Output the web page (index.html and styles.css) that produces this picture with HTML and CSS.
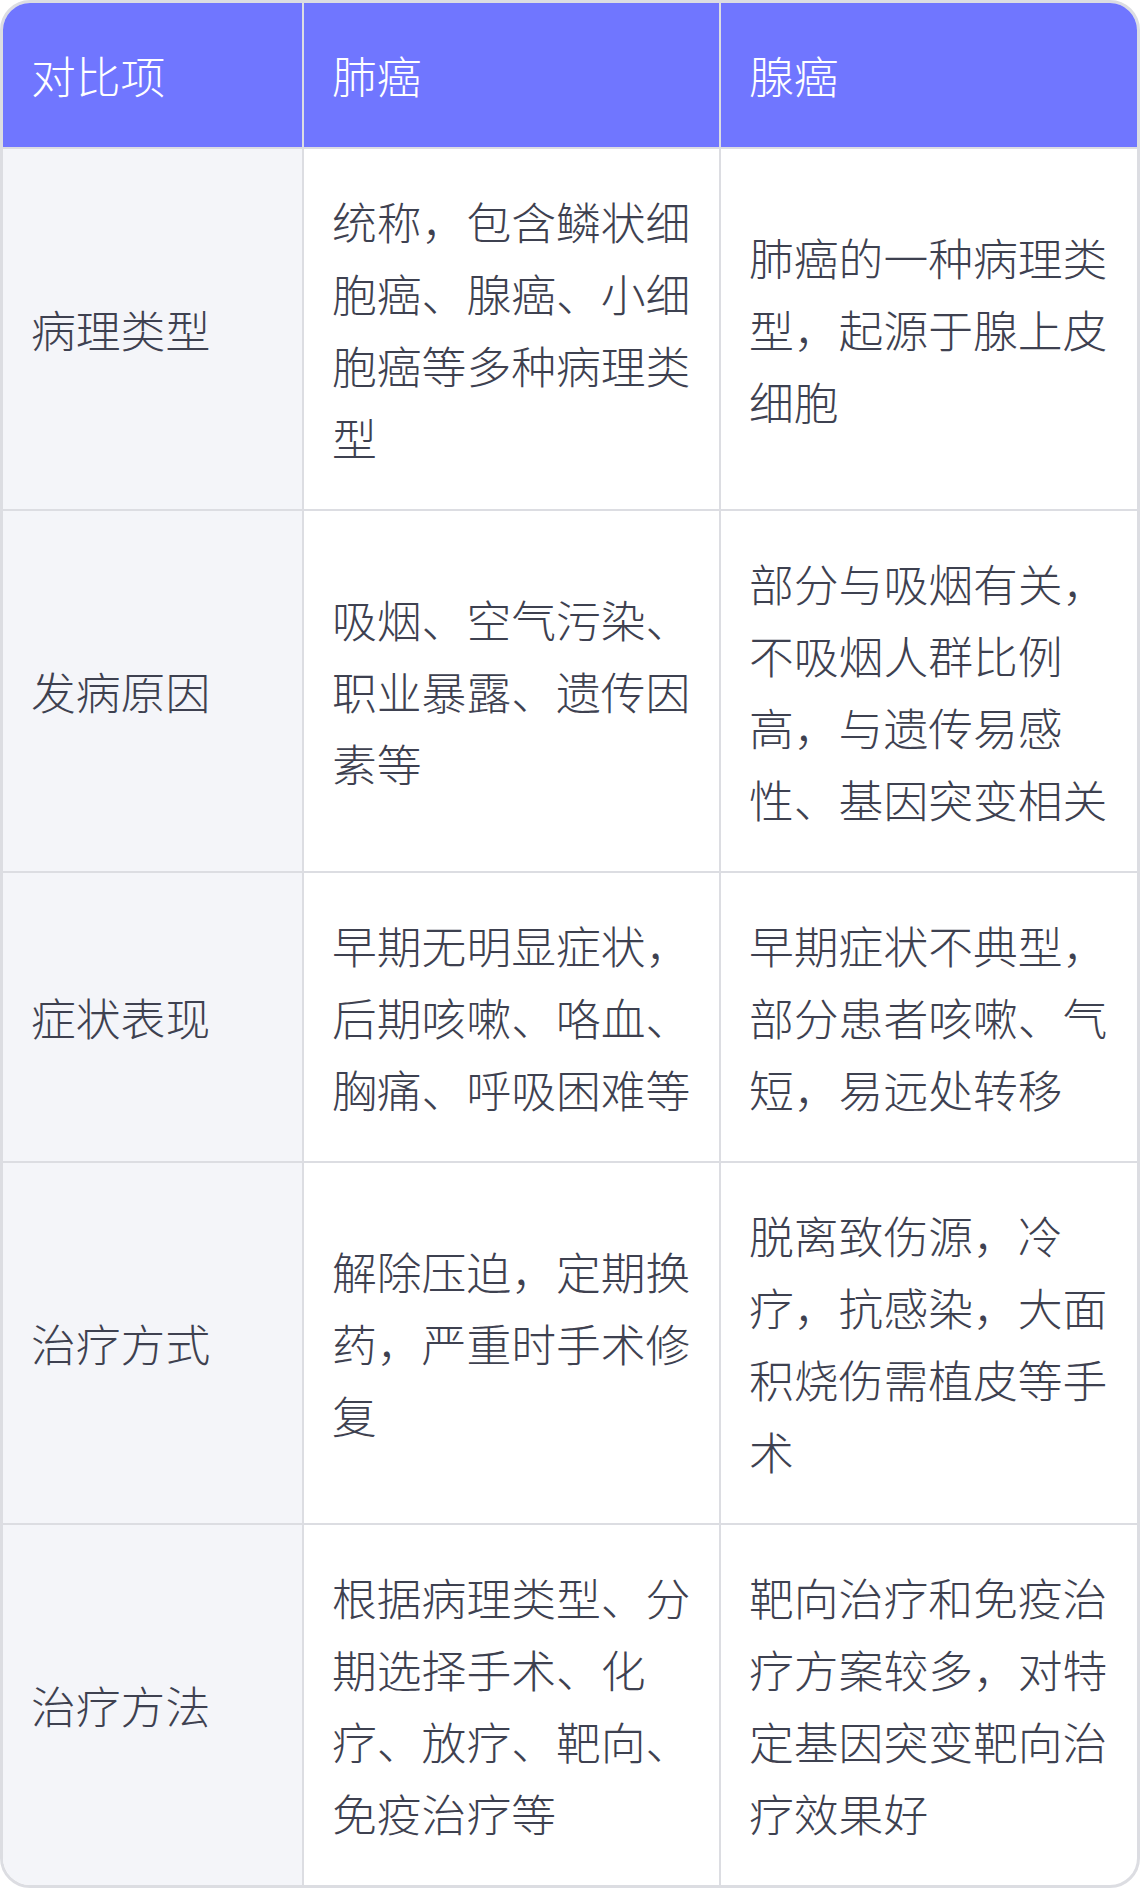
FILE: index.html
```html
<!DOCTYPE html>
<html lang="zh">
<head>
    <meta charset="UTF-8">
    <meta name="viewport" content="width=device-width, initial-scale=1.0">
    <title>肺癌与腺癌对比</title>
    <link rel="stylesheet" href="styles.css">
</head>
<body>
    <div class="compare">
        <div class="cell head">对比项</div>
        <div class="cell head">肺癌</div>
        <div class="cell head last">腺癌</div>

        <div class="cell label">病理类型</div>
        <div class="cell">统称，包含鳞状细胞癌、腺癌、小细胞癌等多种病理类型</div>
        <div class="cell last">肺癌的一种病理类型，起源于腺上皮细胞</div>

        <div class="cell label">发病原因</div>
        <div class="cell">吸烟、空气污染、职业暴露、遗传因素等</div>
        <div class="cell last">部分与吸烟有关，不吸烟人群比例高，与遗传易感性、基因突变相关</div>

        <div class="cell label">症状表现</div>
        <div class="cell">早期无明显症状，后期咳嗽、咯血、胸痛、呼吸困难等</div>
        <div class="cell last">早期症状不典型，部分患者咳嗽、气短，易远处转移</div>

        <div class="cell label">治疗方式</div>
        <div class="cell">解除压迫，定期换药，严重时手术修复</div>
        <div class="cell last">脱离致伤源，冷疗，抗感染，大面积烧伤需植皮等手术</div>

        <div class="cell label bottom">治疗方法</div>
        <div class="cell bottom">根据病理类型、分期选择手术、化疗、放疗、靶向、免疫治疗等</div>
        <div class="cell last bottom">靶向治疗和免疫治疗方案较多，对特定基因突变靶向治疗效果好</div>
    </div>
</body>
</html>
```

FILE: styles.css
```css
body {
    margin: 0;
    background-color: #ffffff;
    font-family: "Noto Sans CJK SC", "Noto Sans", sans-serif;
}
.compare {
    display: grid;
    grid-template-columns: 301px 417px 1fr;
    width: 1140px;
    box-sizing: border-box;
    border: 3px solid #dcdde2;
    border-radius: 30px;
    overflow: hidden;
    background-color: #ffffff;
}
.cell {
    display: flex;
    align-items: center;
    padding: 36px 28px;
    border-right: 2px solid #dcdde2;
    border-bottom: 2px solid #dcdde2;
    font-size: 44.8px;
    font-weight: 300;
    line-height: 72px;
    color: #3e4150;
}
.cell.last {
    border-right: none;
}
.cell.bottom {
    border-bottom: none;
}
.head {
    background-color: #7076ff;
    color: #ffffff;
}
.label {
    background-color: #f4f5f9;
}
```
